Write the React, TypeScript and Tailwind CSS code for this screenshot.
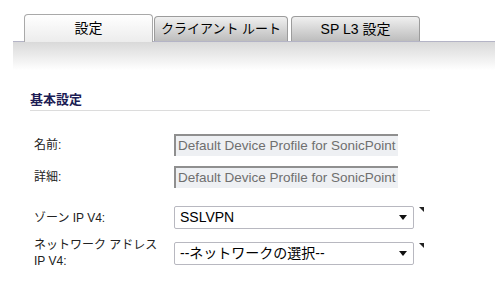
import type { ReactNode } from "react";

const FONT = "font-['Liberation_Sans','Noto_Sans_CJK_JP',sans-serif]";

function Tab({ label, active, width, size }: { label: string; active?: boolean; width: string; size?: string }) {
	if (active) {
		return (
			<div
				className={`${width} h-[28px] -mb-px rounded-t-[4px] border border-b-0 border-[#a9a9a9] bg-gradient-to-b from-white to-[#ececec] flex items-center justify-center text-[14px] text-black whitespace-nowrap relative z-10`}
			>
				{label}
			</div>
		);
	}
	return (
		<div
			className={`${width} ${size ?? "text-[14px]"} h-[25px] rounded-t-[4px] border border-b-0 border-[#9c9c9c] bg-gradient-to-b from-[#f0f0f0] to-[#bdbdbd] flex items-center justify-center text-black whitespace-nowrap`}
		>
			{label}
		</div>
	);
}

function Row({ label, children, className }: { label: ReactNode; children: ReactNode; className?: string }) {
	return (
		<div className={`flex items-center ${className ?? ""}`}>
			<div className="w-[144px] pl-[4px] text-[12px] leading-[16px] text-[#222]">{label}</div>
			{children}
		</div>
	);
}

function ReadOnly({ value }: { value: string }) {
	return (
		<div className="w-[224px] h-[22px] border-t-2 border-l-2 border-[#8f8f8f] bg-[#eef0f3] pl-[2px] flex items-center text-[13.5px] text-[#6f6f6f] whitespace-nowrap overflow-hidden">
			{value}
		</div>
	);
}

function Select({ value }: { value: string }) {
	return (
		<div className="flex items-start gap-[5px]">
			<div className="w-[240px] h-[23px] border border-[#b8b8c0] rounded-[2px] bg-white flex items-center justify-between pl-[5px] pr-[6px] text-[14px] text-black">
				<span>{value}</span>
				<svg width="8" height="5" viewBox="0 0 8 5">
					<path d="M0 0H8L4 5Z" fill="#111" />
				</svg>
			</div>
			<svg width="5" height="5" viewBox="0 0 5 5" className="mt-[1px]">
				<path d="M0 0H5V5Z" fill="#222" />
			</svg>
		</div>
	);
}

export default function App() {
	return (
		<div className={`w-[495px] h-[300px] bg-white pt-[14px] pl-[13px] ${FONT}`}>
			<div className="flex items-end pl-[11px] gap-[1px]">
				<Tab label="設定" active width="w-[129px]" />
				<Tab label="クライアント ルート" width="w-[134px]" size="text-[13px]" />
				<div className="w-[1px]" />
				<Tab label="SP L3 設定" width="w-[129px]" />
			</div>
			<div className="h-[29px] border-t border-[#b4b4c6] bg-gradient-to-b from-[#d9d9d9] to-white" />

			<div className="pl-[17px] pt-[21px]">
				<div className="w-[400px] border-b border-[#dcdcdc] pb-[2px] text-[13px] leading-[17px] font-bold text-[#1c1c54]">
					基本設定
				</div>
				<div className="flex flex-col pt-[23px]">
					<Row label="名前:">
						<ReadOnly value="Default Device Profile for SonicPoint" />
					</Row>
					<Row label="詳細:" className="mt-[10px]">
						<ReadOnly value="Default Device Profile for SonicPoint" />
					</Row>
					<Row label="ゾーン IP V4:" className="mt-[18px]">
						<Select value="SSLVPN" />
					</Row>
					<Row label={<>ネットワーク アドレス<br />IP V4:</>} className="mt-[8px]">
						<Select value="--ネットワークの選択--" />
					</Row>
				</div>
			</div>
		</div>
	);
}
